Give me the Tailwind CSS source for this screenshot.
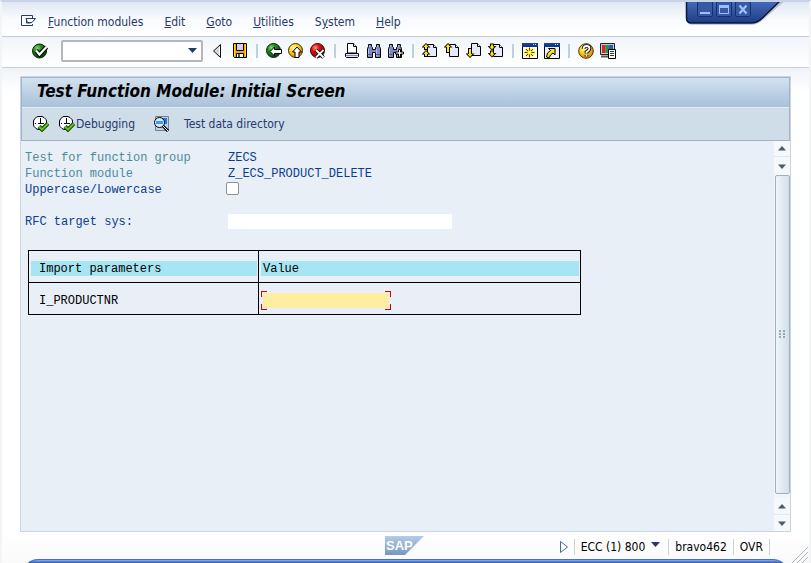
<!DOCTYPE html>
<html lang="en">
<head>
<meta charset="utf-8">
<title>Test Function Module: Initial Screen</title>
<script src="https://cdn.jsdelivr.net/npm/@tailwindcss/browser@4"></script>
</head>
<body class="relative flex min-h-screen flex-col overflow-x-hidden border-x-2 border-t-2 border-x-[#f3f4f6] border-t-[#c6d3e7] bg-white font-['DejaVu_Sans_Condensed','DejaVu_Sans',sans-serif] text-[12px] leading-4 text-[#26396b]">

<svg class="absolute size-0" aria-hidden="true">
  <defs>
    <radialGradient id="gGreen" cx=".35" cy=".3" r=".75"><stop offset="0" stop-color="#8ce070"/><stop offset=".35" stop-color="#23901c"/><stop offset="1" stop-color="#063c0a"/></radialGradient>
    <radialGradient id="gYellow" cx=".35" cy=".3" r=".8"><stop offset="0" stop-color="#fff9b0"/><stop offset=".4" stop-color="#ffd21c"/><stop offset="1" stop-color="#d07c00"/></radialGradient>
    <radialGradient id="gRed" cx=".35" cy=".3" r=".8"><stop offset="0" stop-color="#ff9a80"/><stop offset=".35" stop-color="#e80c0c"/><stop offset="1" stop-color="#700000"/></radialGradient>
    <linearGradient id="gWin" x1="0" y1="0" x2="0" y2="1"><stop offset="0" stop-color="#4a70c0"/><stop offset="1" stop-color="#1d3c83"/></linearGradient>
    <linearGradient id="gLogo" x1="0" y1="0" x2="0" y2="1"><stop offset="0" stop-color="#b4cce6"/><stop offset="1" stop-color="#7498c2"/></linearGradient>
    <linearGradient id="gBar" x1="0" y1="0" x2="0" y2="1"><stop offset="0" stop-color="#1746a8"/><stop offset="1" stop-color="#0a2f86"/></linearGradient>
    <symbol id="page" viewBox="0 0 16 16"><path d="M5.500 1.500h6l3 3v9h-9z" fill="#e6eafa" stroke="#000"/><path d="M11.500 1.500v3h3" fill="#fff" stroke="#000"/></symbol>
    <symbol id="clock" viewBox="0 0 16 16">
      <path d="M5 .5h4l2 1 2 2 .5 1.500v4l-1 2-2 2-1.500 .5H5l-2-1-2-2L.5 9V5l1-2 2-2z" fill="#fff" stroke="#000"/>
      <path d="M7.500 3v5M5 7.500h6M7.500 2v1M2 7.500h1M7.500 11v1" stroke="#000" fill="none"/>
      <path d="M6 10.500l3 3 6-6" fill="none" stroke="#0c3a00" stroke-width="4"/><path d="M6 10.500l3 3 6-6" fill="none" stroke="#5fc420" stroke-width="2"/>
    </symbol>
    <symbol id="bino" viewBox="0 0 16 16">
      <path d="M2.500 1.500h3v2l1 1v2h3v-2l1-1v-2h3v2l1 2v9h-5v-5h-3v5h-5v-9l1-2z" fill="#7f88c6" stroke="#000"/>
      <path d="M3.500 2v2M2.500 6v7M11.500 2v2M10.500 6v7" stroke="#b4bce8"/>
      <path d="M1.500 11.500h4M10 11.500h4" stroke="#4c5596"/>
    </symbol>
  </defs>
</svg>

<nav aria-label="Menu" class="flex items-center gap-[21px] border-b border-[#c4cbda] bg-linear-to-b from-[#e1e8f3] via-[#f8fafd] to-white pt-3 pr-32 pb-1.5 pl-[19px]">
  <button type="button" aria-label="System menu" class="-mr-2.5"><svg class="size-4" viewBox="0 0 16 16" fill="none" stroke="#26396b"><path d="M11.500 4V1.500H.5v10h11V10"/><path d="M5 4.500h9.500L11 8.500H6.500z" fill="#fff"/><path d="M5.500 5v4h4"/></svg></button>
  <button type="button"><u>F</u>unction modules</button>
  <button type="button"><u>E</u>dit</button>
  <button type="button"><u>G</u>oto</button>
  <button type="button"><u>U</u>tilities</button>
  <button type="button">S<u>y</u>stem</button>
  <button type="button"><u>H</u>elp</button>
</nav>

<div class="absolute -top-0.5 right-[22px] h-7 w-[102px]">
  <svg class="absolute inset-0 h-7 w-[102px]" viewBox="0 0 102 28" aria-hidden="true">
    <path d="M2 0v19q0 6 6 6h57q8 0 14-6L101 0z" fill="#8d94a6" opacity=".45"/>
    <path d="M1.500-1v19q0 5 5 5h60q6 0 11-5L97-1z" fill="url(#gWin)" stroke="#0b1638" stroke-width="1.500"/>
  </svg>
  <div class="relative flex gap-[3px] pt-px pl-3 text-[#9cc0ff]">
    <button type="button" aria-label="Minimize" class="size-4 rounded-xs border border-[#16306e] bg-[#3759a4]"><svg class="size-3.5" viewBox="0 0 14 14"><path d="M2 10h10v2H2z" fill="currentColor"/></svg></button>
    <button type="button" aria-label="Maximize" class="size-4 rounded-xs border border-[#16306e] bg-[#3759a4]"><svg class="size-3.5" viewBox="0 0 14 14"><path d="M2 3h10v9H2zM3 6v5h8V6z" fill="currentColor" fill-rule="evenodd"/></svg></button>
    <button type="button" aria-label="Close" class="size-4 rounded-xs border border-[#16306e] bg-[#3759a4]"><svg class="size-3.5" viewBox="0 0 14 14"><path d="M3.500 3.500l7 8m0-8l-7 8" stroke="currentColor" stroke-width="2.200"/></svg></button>
  </div>
</div>

<div role="toolbar" aria-label="Standard toolbar" class="flex items-center gap-1.5 border-b border-[#c9cfdb] bg-linear-to-b from-[#f1f5fa] to-white pt-[3px] pb-[5px] pl-[30px]">
  <button type="button" aria-label="Enter"><svg class="size-4" viewBox="0 0 16 16"><circle cx="7.500" cy="8" r="7" fill="url(#gGreen)" stroke="#042c06"/><path d="M4 7.500l3.500 4 7-7.500" fill="none" stroke="#000" stroke-width="4.500"/><path d="M4 7.500l3.500 4 7-7.500" fill="none" stroke="#fff" stroke-width="2.200"/></svg></button>
  <div class="relative ml-[7px] w-[142px]">
    <input type="text" aria-label="Command" class="block h-[22px] w-full rounded-xs border-2 border-[#b3b7bd] bg-white pr-5 pl-1 outline-none">
    <button type="button" aria-label="Command history" class="absolute top-2 right-1.5"><svg class="h-[5px] w-[9px]" viewBox="0 0 9 5"><path d="M0 0h9L4.500 5z" fill="#26396b"/></svg></button>
  </div>
  <button type="button" aria-label="Close command field" class="mr-px"><svg class="size-4" viewBox="0 0 16 16"><path d="M11.500 1.500v13L4.500 8z" fill="#d3d6db" stroke="#111"/><path d="M10.500 4v8" stroke="#fff"/></svg></button>
  <button type="button" aria-label="Save"><svg class="size-4" viewBox="0 0 16 16"><path d="M1.500 .5h13v14h-12l-1-1z" fill="#f7a800" stroke="#000"/><path d="M4.500 .5h7v7h-7z" fill="#dcc9f0" stroke="#000"/><path d="M4.500 10.500h7v4h-7z" fill="#fff" stroke="#000"/><path d="M6 11h2v3H6z" fill="#555"/><path d="M2.500 2v11M13.500 2v11" stroke="#ffd84a"/></svg></button>
  <span class="mx-0.5 h-3.5 w-0.5 bg-[#bcd0e2]"></span>
  <button type="button" aria-label="Back"><svg class="size-4" viewBox="0 0 16 16"><circle cx="7.500" cy="7.500" r="7" fill="url(#gGreen)" stroke="#042c06"/><path d="M4 8.500l4.500-4.500V6.500h7v4h-7V13z" fill="#fff" stroke="#000"/></svg></button>
  <button type="button" aria-label="Exit"><svg class="size-4" viewBox="0 0 16 16"><circle cx="7.500" cy="7.500" r="7" fill="url(#gYellow)" stroke="#4a2e00"/><path d="M9 4l4.500 5H11v5.500H7V9H4.500z" fill="#fff" stroke="#000"/></svg></button>
  <button type="button" aria-label="Cancel"><svg class="size-4" viewBox="0 0 16 16"><circle cx="7.500" cy="7.500" r="7" fill="url(#gRed)" stroke="#4a0000"/><path d="M6 7l7.500 7.500m0-7.500L6 14.500" stroke="#000" stroke-width="3.600"/><path d="M6 7l7.500 7.500m0-7.500L6 14.500" stroke="#fff" stroke-width="1.800"/></svg></button>
  <span class="mx-0.5 h-3.5 w-0.5 bg-[#bcd0e2]"></span>
  <button type="button" aria-label="Print"><svg class="size-4" viewBox="0 0 16 16"><path d="M3.500 10V.5h6l3 3V10z" fill="#fff" stroke="#000"/><path d="M9.500 .5v3h3" fill="#fff" stroke="#000"/><path d="M1.500 10.500h13v3l-1 1h-11l-1-1z" fill="#dfe3f5" stroke="#000"/><path d="M2 12.500h12" stroke="#7f88c6"/></svg></button>
  <button type="button" aria-label="Find"><svg class="size-4"><use href="#bino"/></svg></button>
  <button type="button" aria-label="Find next"><svg class="size-4" viewBox="0 0 16 16"><use href="#bino" x="-1" width="16" height="16"/><path d="M10.500 6.500h2v2.500h3v2h-3v3h-2v-3h-3V9h3z" fill="#fff" stroke="#000"/></svg></button>
  <span class="mx-0.5 h-3.5 w-0.5 bg-[#bcd0e2]"></span>
  <button type="button" aria-label="First page"><svg class="size-4" viewBox="0 0 16 16"><use href="#page"/><path d="M4 0l4.500 4.500H6V7H2V4.500H-.5z M4 7l4.500 4.500H6V14H2v-2.500H-.5z" fill="#000"/><path d="M4 1l2.500 3H5v2H3V4H1.500z M4 8l2.500 3H5v2H3v-2H1.500z" fill="#ffe60a"/></svg></button>
  <button type="button" aria-label="Previous page"><svg class="size-4" viewBox="0 0 16 16"><use href="#page"/><path d="M4 0l4.500 4.500H6V10H2V4.500H-.5z" fill="#000"/><path d="M4 1l2.500 3H5v5H3V4H1.500z" fill="#ffe60a"/></svg></button>
  <button type="button" aria-label="Next page"><svg class="size-4" viewBox="0 0 16 16"><use href="#page" y="-1" width="16" height="16"/><path d="M4 15l4.500-4.500H6V5H2v5.500H-.5z" fill="#000"/><path d="M4 14l2.500-3H5V6H3v5H1.500z" fill="#ffe60a"/></svg></button>
  <button type="button" aria-label="Last page"><svg class="size-4" viewBox="0 0 16 16"><use href="#page"/><path d="M4 7.500L8.500 3H6V.5H2V3H-.5z M4 14.500L8.500 10H6V7.500H2V10H-.5z" fill="#000"/><path d="M4 6.500l2.500-3H5v-2H3v2H1.500z M4 13.500l2.500-3H5v-2H3v2H1.500z" fill="#ffe60a"/></svg></button>
  <span class="mx-0.5 h-3.5 w-0.5 bg-[#bcd0e2]"></span>
  <button type="button" aria-label="New session"><svg class="size-4" viewBox="0 0 16 16"><path d="M.5 .5h15v15H.5z" fill="#fffde8" stroke="#000"/><path d="M0 0h16v4H0z" fill="url(#gBar)"/><path d="M11 1h1v1h-1zM13 1h1v1h-1z" fill="#cfe0ff"/><path d="M7.500 5v9M2.500 9.500h10M4 6l7 7M11 6l-7 7" stroke="#ffe60a" stroke-width="2"/><path d="M7.500 4.500v3M7.500 11.500v3M2.500 9.500h3M9.500 9.500h3M4 6l2 2M11 6L9 8M4 13l2-2M11 13l-2-2" stroke="#4a4200"/><path d="M6.500 8.500h2v2h-2z" fill="#fff"/></svg></button>
  <button type="button" aria-label="Create shortcut"><svg class="size-4" viewBox="0 0 16 16"><path d="M.5 .5h15v15H.5z" fill="#eef1fb" stroke="#000"/><path d="M0 0h16v4H0z" fill="url(#gBar)"/><path d="M11 1h1v1h-1zM13 1h1v1h-1z" fill="#cfe0ff"/><path d="M4.500 5.500h6.500v6.500l-2-2-2.500 2-1.500 3-2.500-1 1-4 3-2.500z" fill="#ffe21a" stroke="#000"/></svg></button>
  <span class="mx-0.5 h-3.5 w-0.5 bg-[#bcd0e2]"></span>
  <button type="button" aria-label="Help"><svg class="size-4" viewBox="0 0 16 16"><circle cx="8" cy="8" r="7.300" fill="url(#gYellow)" stroke="#4a3200"/><path d="M5.500 6q0-3 3-3t3 2.500q0 1.500-3 3.500v1.500M8.500 12v1.500" fill="none" stroke="#000" stroke-width="3.600"/><path d="M5.500 6q0-3 3-3t3 2.500q0 1.500-3 3.500v1.500M8.500 12v1.500" fill="none" stroke="#fff" stroke-width="1.800"/></svg></button>
  <button type="button" aria-label="Customize local layout"><svg class="size-4" viewBox="0 0 16 16"><path d="M.5 .5h14v11H.5z" fill="#c9cbd4" stroke="#222"/><path d="M2 2h3.500v8H2z" fill="#e02030"/><path d="M5.500 2H9v8H5.500z" fill="#14a03c"/><path d="M9 2h4v8H9z" fill="#3a50c8"/><path d="M1 13.500h8" stroke="#555" stroke-width="2"/><path d="M8.500 6.500h7v9h-7z" fill="#fff" stroke="#000"/><path d="M10 8.500h4M10 10.500h4M10 12.500h4" stroke="#333"/></svg></button>
</div>

<div class="flex grow flex-col bg-linear-to-b from-[#eff3f9] to-white to-[24px] px-[18px] pt-2">
  <main class="flex grow flex-col border border-[#c9d5e4] bg-[#e8eff6]">
    <header class="border border-[#9fb4c9] bg-[#cfdde8]">
      <h1 class="border-b border-[#e3edf5] bg-linear-to-b from-[#d2e1ee] to-[#a9c1d9] px-[15px] pt-[3px] pb-[6px] text-[17px] leading-5 font-bold text-black italic">Test Function Module: Initial Screen</h1>
      <div role="toolbar" aria-label="Application toolbar" class="flex items-center px-[11px] py-2">
        <button type="button" aria-label="Execute"><svg class="size-4"><use href="#clock"/></svg></button>
        <button type="button" class="ml-2.5 flex items-center gap-px"><svg class="size-4"><use href="#clock"/></svg>Debugging</button>
        <button type="button" class="ml-[18px] flex items-center gap-[15px]"><svg class="size-4" viewBox="0 0 16 16"><path d="M2.500 .5h13v14h-13z" fill="#c3d0dd" stroke="#6f8296"/><path d="M4 2h10v6H4z" fill="#1e7fe0"/><circle cx="6.500" cy="6.500" r="5" fill="#d4ecff" stroke="#000"/><path d="M3 5h7v3H3z" fill="#3f9df0"/><path d="M10 10l5 5" stroke="#000" stroke-width="3"/><path d="M10 10l5 5" stroke="#fff"/></svg>Test data directory</button>
      </div>
    </header>

    <div class="flex grow">
      <form class="grow pt-[9px] pl-1 font-['Liberation_Mono',monospace] text-[#0a3d8f]">
        <div class="flex"><span class="w-[203px] text-[#4d8b9c]">Test for function group</span><span>ZECS</span></div>
        <div class="flex"><span class="w-[203px] text-[#4d8b9c]">Function module</span><span>Z_ECS_PRODUCT_DELETE</span></div>
        <div class="flex items-start"><label for="ul" class="w-[201px]">Uppercase/Lowercase</label><input id="ul" type="checkbox" class="size-[13px] appearance-none rounded-xs border border-[#8c8f94] bg-white"></div>
        <div class="mt-4 flex items-start"><label for="rfc" class="w-[203px]">RFC target sys:</label><input id="rfc" type="text" class="h-[15px] w-56 bg-white outline-none"></div>

        <table class="mt-5 ml-[3px] w-[553px] table-fixed border-collapse border border-black text-left text-black">
          <colgroup><col class="w-[230px]"><col></colgroup>
          <thead>
            <tr class="h-8">
              <th scope="col" class="border border-black p-0 pt-1 pr-px pl-0.5 font-normal"><div class="bg-[#a6e5f3] pt-px pl-2 leading-[14px]">Import parameters</div></th>
              <th scope="col" class="border border-black p-0 pt-1 pr-px pl-0.5 font-normal"><div class="bg-[#a6e5f3] pt-px pl-0.5 leading-[14px]">Value</div></th>
            </tr>
          </thead>
          <tbody>
            <tr class="h-8">
              <td class="border border-black p-0 pt-1 pl-2.5"><label for="pnr">I_PRODUCTNR</label></td>
              <td class="border border-black p-0 pt-1 pl-0.5">
                <div class="relative w-[130px] px-0.5 py-0.5">
                  <input id="pnr" type="text" class="block h-[15px] w-full bg-[#ffee9f] outline-none">
                  <span class="absolute top-0 left-0 size-1.5 border-t border-l border-[#d4000c]"></span>
                  <span class="absolute top-0 right-0 size-1.5 border-t border-r border-[#d4000c]"></span>
                  <span class="absolute bottom-0 left-0 size-1.5 border-b border-l border-[#d4000c]"></span>
                  <span class="absolute right-0 bottom-0 size-1.5 border-r border-b border-[#d4000c]"></span>
                </div>
              </td>
            </tr>
          </tbody>
        </table>
      </form>

      <div class="flex w-4 flex-col bg-[#f1f5fa] text-[#4a5d6b]">
        <button type="button" aria-label="Scroll to top" class="flex h-4 items-center justify-center border-b border-[#e2e9f0] bg-[#f6f9fc]"><svg class="h-[5px] w-2" viewBox="0 0 8 5"><path d="M0 4.500L4 0l4 4.500z" fill="currentColor"/></svg></button>
        <button type="button" aria-label="Scroll down" class="flex h-[18px] items-center justify-center bg-[#f6f9fc]"><svg class="h-[5px] w-2" viewBox="0 0 8 5"><path d="M0 .5h8L4 5z" fill="currentColor"/></svg></button>
        <div class="ml-px flex grow items-center justify-center rounded-xs border border-[#9fb0bf] bg-linear-to-r from-[#f0f5f9] to-[#cfdfea]"><svg class="h-[9px] w-[7px]" viewBox="0 0 7 9" fill="#97aabd"><path d="M0 0h2v2H0zM4 0h2v2H4zM0 3h2v2H0zM4 3h2v2H4zM0 6h2v2H0zM4 6h2v2H4z"/></svg></div>
        <button type="button" aria-label="Scroll up" class="mt-1 flex h-[17px] items-center justify-center border-b border-[#e2e9f0] bg-[#f6f9fc]"><svg class="h-[5px] w-2" viewBox="0 0 8 5"><path d="M0 4.500L4 0l4 4.500z" fill="currentColor"/></svg></button>
        <button type="button" aria-label="Scroll to bottom" class="flex h-4 items-center justify-center bg-[#f6f9fc]"><svg class="h-[5px] w-2" viewBox="0 0 8 5"><path d="M0 .5h8L4 5z" fill="currentColor"/></svg></button>
      </div>
    </div>
  </main>
</div>

<footer class="relative bg-linear-to-b from-white to-[#fafafb] px-5 text-black">
  <div class="relative flex h-[27px] items-center justify-end gap-1.5 pt-0.5 pr-[19px]">
    <svg class="absolute top-1 left-[47.300%] h-[19px] w-[39px]" viewBox="0 0 39 19" role="img" aria-label="SAP"><path d="M0 0h39L20 19H0z" fill="url(#gLogo)"/><text x="1" y="14" fill="#fff" font-family="Liberation Sans, sans-serif" font-size="13" font-weight="700">SAP</text></svg>
    <button type="button" aria-label="Show status fields"><svg class="h-3 w-2" viewBox="0 0 8 12"><path d="M.5 .5v11L7.500 6z" fill="#fff" stroke="#4a6a8c"/></svg></button>
    <span class="h-4 w-px bg-[#cdd1d8]"></span>
    <button type="button" class="mr-0.5 flex items-center gap-1.5">ECC (1) 800<svg class="mb-1 h-[5px] w-[9px]" viewBox="0 0 9 5"><path d="M0 0h9L4.500 5z" fill="#26396b"/></svg></button>
    <span class="h-4 w-px bg-[#cdd1d8]"></span>
    <span>bravo462</span>
    <span class="h-4 w-px bg-[#cdd1d8]"></span>
    <span>OVR</span>
    <span class="h-4 w-px bg-[#cdd1d8]"></span>
  </div>
  <div class="h-1 overflow-hidden"><div class="h-8 rounded-2xl border-t border-[#4a6fb5] bg-linear-to-b from-[#8fb0ea] to-[#2d55b0] to-[3px]"></div></div>
  <svg class="absolute right-0 bottom-0 size-[18px]" viewBox="0 0 18 18" stroke="#a9b2c4" aria-hidden="true"><path d="M1 18L17 2M6 18L17 7M11 18l6-6"/></svg>
</footer>
</body>
</html>
